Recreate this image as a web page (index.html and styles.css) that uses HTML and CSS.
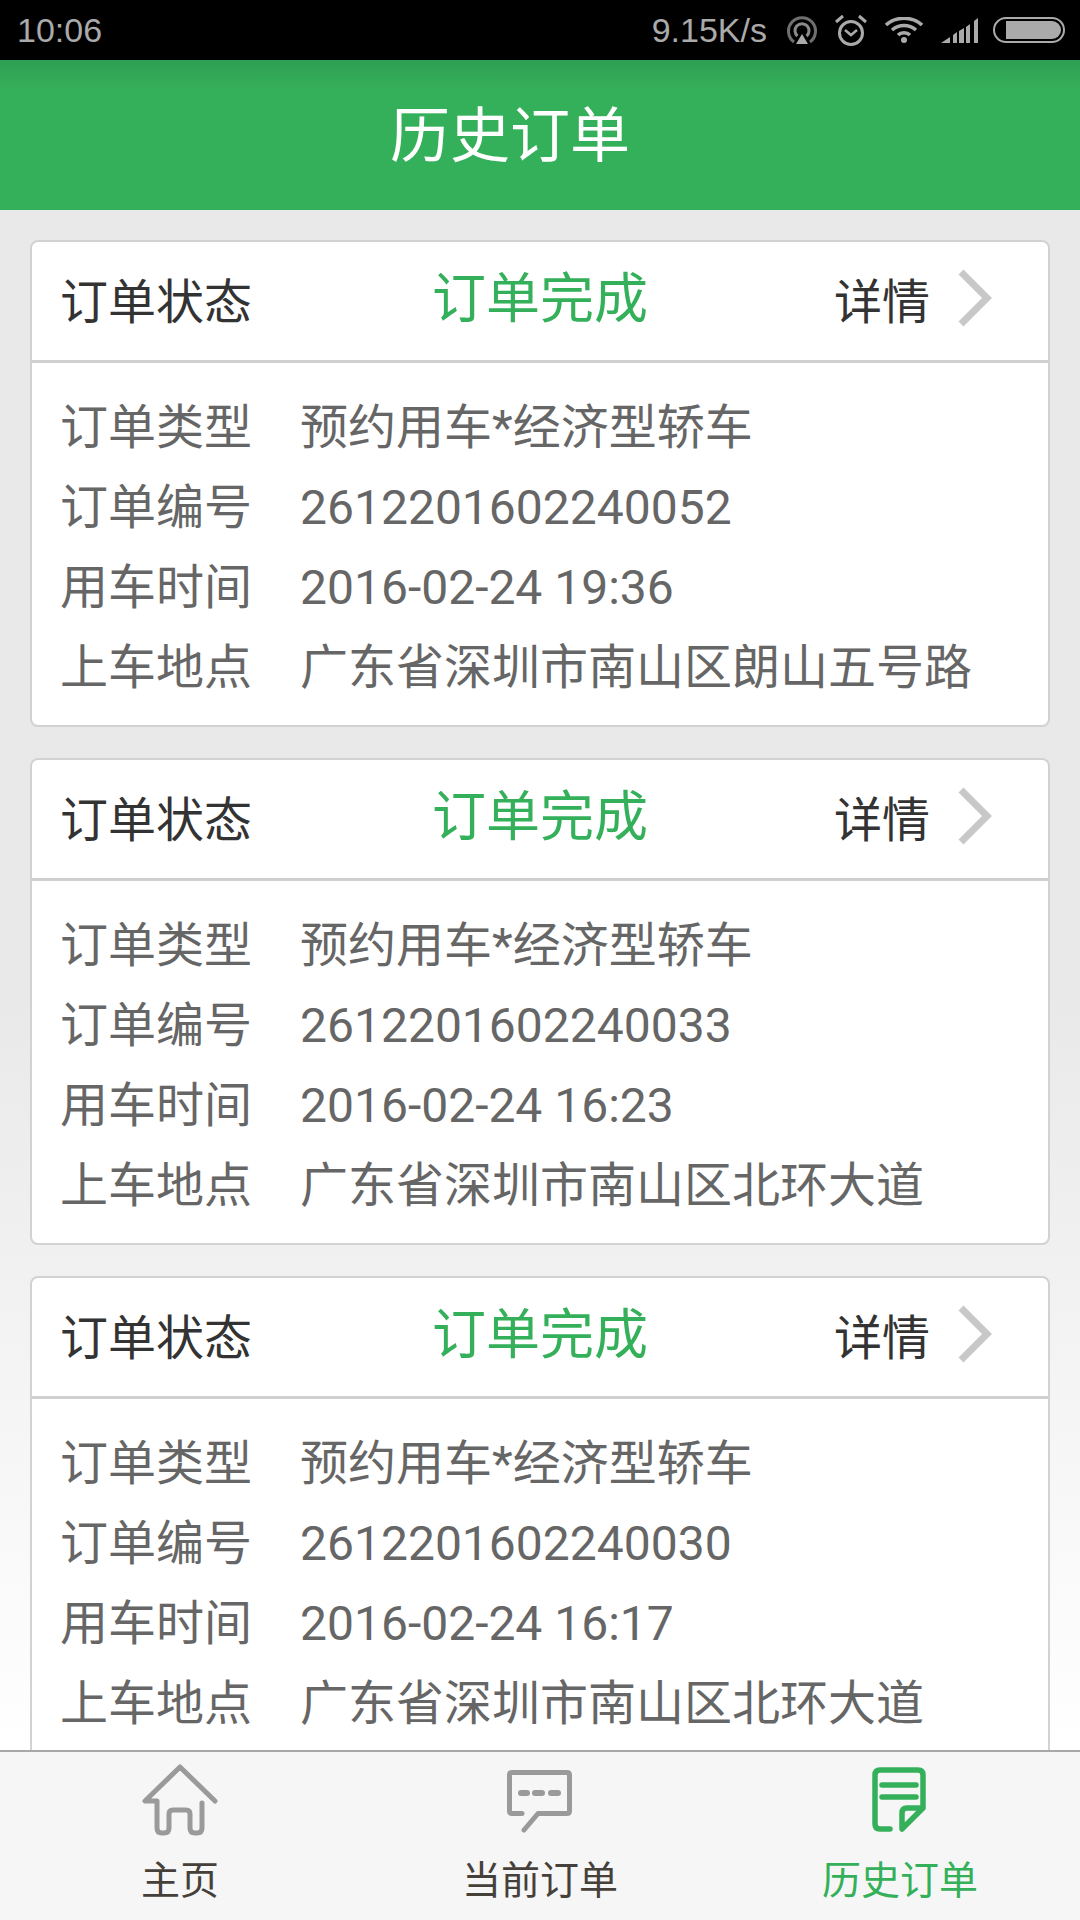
FILE: index.html
```html
<!DOCTYPE html>
<html lang="zh-CN">
<head>
    <meta charset="UTF-8">
    <meta name="viewport" content="width=device-width, initial-scale=1.0">
    <title>历史订单</title>
    <link rel="stylesheet" href="styles.css">
</head>
<body>
    <div class="status-bar">
        <span class="clock">10:06</span>
        <div class="status-right">
            <span class="speed">9.15K/s</span>
            <svg class="st-icon" width="30" height="28" viewBox="0 0 30 28" fill="none" stroke-width="3">
                <path d="M7 26A13.5 13.5 0 1 1 23 26" stroke="#6f6f6f"/>
                <path d="M10.500 20A7 7 0 1 1 19.500 20" stroke="#8a8a8a"/>
                <path d="M15 18l6 10H9z" fill="#aaa"/>
            </svg>
            <svg class="st-icon" width="32" height="32" viewBox="0 0 32 32" fill="none" stroke="#aaa" stroke-width="3">
                <circle cx="16" cy="19" r="11.500"/>
                <path d="M10 16l6 5 6-5" stroke-width="2.500"/>
                <path d="M1 8l7-6M31 8l-7-6"/>
            </svg>
            <svg class="st-icon" width="38" height="26" viewBox="0 0 38 26" fill="none" stroke="#aaa" stroke-width="3.500">
                <path d="M1 8c10-9 26-9 36 0"/>
                <path d="M7 13c7-6 17-6 24 0"/>
                <path d="M13 18c3-3 9-3 12 0"/>
                <circle cx="19" cy="23" r="3" fill="#aaa" stroke="none"/>
            </svg>
            <svg class="st-icon" width="37" height="25" viewBox="0 0 37 25" fill="#aaa">
                <path d="M0 25l9-6v6zM12 25v-8l4-3v11zM18 25V13l5-3v15zM25 25V9l4-3v19zM33 25V3l4-3v25z"/>
            </svg>
            <div class="battery"><div class="battery-fill"></div></div>
        </div>
    </div>

    <header class="title-bar">历史订单</header>

    <main class="order-list">
        <section class="order-card">
            <div class="card-head">
                <span class="head-label">订单状态</span>
                <span class="head-status">订单完成</span>
                <span class="head-link">详情</span>
                <svg class="chevron" width="38" height="62" viewBox="0 0 38 62" fill="none" stroke="#c8c8c8" stroke-width="7">
                    <path d="M5 5l26 26L5 57"/>
                </svg>
            </div>
            <div class="card-body">
                <div class="row"><span class="row-label">订单类型</span><span class="row-value">预约用车*经济型轿车</span></div>
                <div class="row"><span class="row-label">订单编号</span><span class="row-value">2612201602240052</span></div>
                <div class="row"><span class="row-label">用车时间</span><span class="row-value">2016-02-24 19:36</span></div>
                <div class="row"><span class="row-label">上车地点</span><span class="row-value">广东省深圳市南山区朗山五号路</span></div>
            </div>
        </section>
        <section class="order-card">
            <div class="card-head">
                <span class="head-label">订单状态</span>
                <span class="head-status">订单完成</span>
                <span class="head-link">详情</span>
                <svg class="chevron" width="38" height="62" viewBox="0 0 38 62" fill="none" stroke="#c8c8c8" stroke-width="7">
                    <path d="M5 5l26 26L5 57"/>
                </svg>
            </div>
            <div class="card-body">
                <div class="row"><span class="row-label">订单类型</span><span class="row-value">预约用车*经济型轿车</span></div>
                <div class="row"><span class="row-label">订单编号</span><span class="row-value">2612201602240033</span></div>
                <div class="row"><span class="row-label">用车时间</span><span class="row-value">2016-02-24 16:23</span></div>
                <div class="row"><span class="row-label">上车地点</span><span class="row-value">广东省深圳市南山区北环大道</span></div>
            </div>
        </section>
        <section class="order-card">
            <div class="card-head">
                <span class="head-label">订单状态</span>
                <span class="head-status">订单完成</span>
                <span class="head-link">详情</span>
                <svg class="chevron" width="38" height="62" viewBox="0 0 38 62" fill="none" stroke="#c8c8c8" stroke-width="7">
                    <path d="M5 5l26 26L5 57"/>
                </svg>
            </div>
            <div class="card-body">
                <div class="row"><span class="row-label">订单类型</span><span class="row-value">预约用车*经济型轿车</span></div>
                <div class="row"><span class="row-label">订单编号</span><span class="row-value">2612201602240030</span></div>
                <div class="row"><span class="row-label">用车时间</span><span class="row-value">2016-02-24 16:17</span></div>
                <div class="row"><span class="row-label">上车地点</span><span class="row-value">广东省深圳市南山区北环大道</span></div>
            </div>
        </section>
    </main>

    <nav class="tab-bar">
        <div class="tab">
            <svg width="76" height="76" viewBox="0 0 76 76" fill="none" stroke="#9a9a9a" stroke-width="5" stroke-linecap="round" stroke-linejoin="round">
                <path d="M73 37L38 3 3 37h12v27q0 5 5 5h2q5 0 5-5V50q0-4 4-4h13q4 0 4 4v14q0 5 5 5h2q5 0 5-5V39"/>
            </svg>
            <span class="tab-label">主页</span>
        </div>
        <div class="tab">
            <svg width="76" height="76" viewBox="0 0 76 76" fill="none" stroke="#9a9a9a" stroke-width="5" stroke-linecap="round" stroke-linejoin="round">
                <path d="M20 49.500H10q-2.500 0-2.500-2.500V11q0-2.500 2.500-2.500h55q2.500 0 2.500 2.500v36q0 2.500-2.500 2.500H36L22 66"/>
                <path d="M19 29h6M33 29h7M49 29h7" stroke-width="6"/>
            </svg>
            <span class="tab-label">当前订单</span>
        </div>
        <div class="tab tab-active">
            <svg width="76" height="76" viewBox="0 0 76 76" fill="none" stroke="#35b05a" stroke-width="5.500" stroke-linecap="round" stroke-linejoin="round">
                <path d="M28 65H18q-5 0-5-5V11q0-5 5-5h38q5 0 5 5v33L40 65V49q0-5 5-5h16"/>
                <path d="M20 21h34M20 33h34"/>
            </svg>
            <span class="tab-label">历史订单</span>
        </div>
    </nav>
</body>
</html>
```

FILE: styles.css
```css
/* Global Styles */
html, body {
    margin: 0;
    padding: 0;
    height: 1920px;
    overflow: hidden;
}

body {
    display: flex;
    flex-direction: column;
    font-family: "Noto Sans CJK SC", Roboto, sans-serif;
    background: linear-gradient(#e9e9e9 0, #e9e9e9 1000px, #ffffff 1750px);
}

/* Status bar */
.status-bar {
    height: 60px;
    flex: none;
    background: #000;
    color: #aaa;
    font-family: "Liberation Sans", Arial, sans-serif;
    font-size: 34px;
    display: flex;
    align-items: center;
    justify-content: space-between;
    padding: 0 15px 0 17px;
}

.status-right {
    display: flex;
    align-items: center;
    gap: 18px;
}

.speed {
    margin-right: 2px;
}

.st-icon {
    display: block;
}

.battery {
    width: 72px;
    height: 26px;
    box-sizing: border-box;
    border: 2px solid #aaa;
    border-radius: 13px;
    padding: 2px 2px 2px 11px;
    margin-left: -3px;
}

.battery-fill {
    height: 100%;
    background: #aaa;
    border-radius: 0 9px 9px 0;
}

/* Title */
.title-bar {
    height: 150px;
    flex: none;
    box-sizing: border-box;
    padding: 0 60px 10px 0;
    display: flex;
    align-items: center;
    justify-content: center;
    color: #fff;
    font-size: 60px;
    background: linear-gradient(#2f9f52 0, #35b05a 30px);
}

/* Order cards */
.order-list {
    flex: 1;
    overflow: hidden;
    padding: 30px 30px 0;
    display: flex;
    flex-direction: column;
    gap: 31px;
}

.order-card {
    flex: none;
    height: 487px;
    box-sizing: border-box;
    background: #fff;
    border: 2px solid #d2d2d2;
    border-radius: 8px;
}

.card-head {
    height: 121px;
    box-sizing: border-box;
    border-bottom: 3px solid #cfcfcf;
    display: flex;
    align-items: center;
    padding: 0 0 6px 28px;
    color: #333;
    font-size: 48px;
}

.head-label {
    width: 372px;
}

.head-status {
    width: 402px;
    color: #35b05a;
    font-size: 54px;
    margin-top: -8px;
}

.head-link {
    width: 122px;
}

.chevron {
    display: block;
}

.card-body {
    padding: 25px 0 0 28px;
}

.row {
    height: 80px;
    display: flex;
    align-items: baseline;
    font-size: 48px;
    color: #666;
}

.row-label {
    width: 240px;
}

.row-value {
    font-family: Roboto, "Noto Sans CJK SC", sans-serif;
}

/* Bottom tabs */
.tab-bar {
    height: 170px;
    flex: none;
    box-sizing: border-box;
    background: #f6f6f6;
    border-top: 2px solid #a8a8a8;
    display: flex;
}

.tab {
    flex: 1;
    display: flex;
    flex-direction: column;
    align-items: center;
    padding-top: 12px;
    color: #46403a;
    font-size: 39px;
}

.tab-label {
    margin-top: 12px;
    line-height: 50px;
}

.tab-active {
    color: #35b05a;
}
```
